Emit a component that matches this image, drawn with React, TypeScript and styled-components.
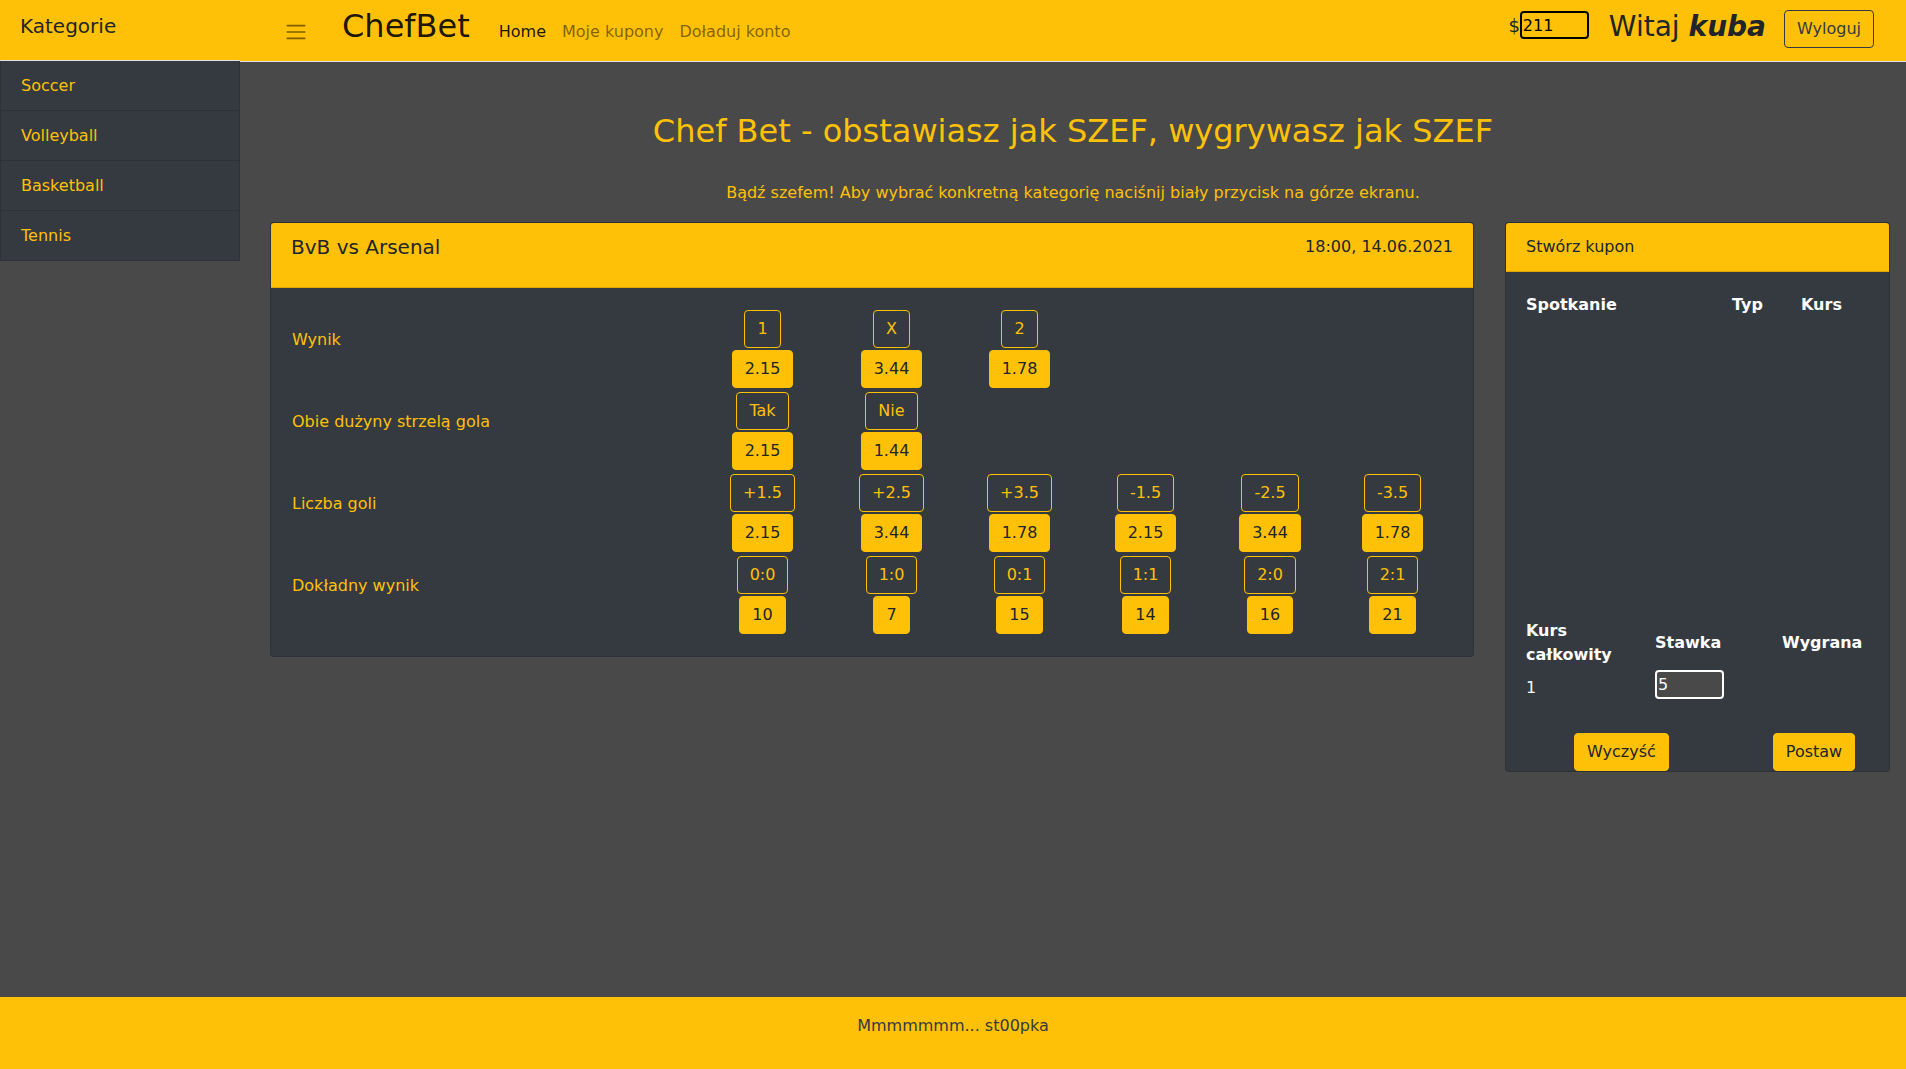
import React from "react";
import styled, { createGlobalStyle } from "styled-components";

const YELLOW = "#ffc107";
const DARK = "#343a40";
const BG = "#494949";
const TEXT = "#212529";

const GlobalStyle = createGlobalStyle`
  html, body { margin: 0; padding: 0; }
  body {
    background: ${BG};
    font-family: "DejaVu Sans", "Noto Sans", sans-serif;
    font-size: 16px;
    line-height: 1.5;
    color: ${TEXT};
  }
  *, *::before, *::after { box-sizing: border-box; }
  button, input { font-family: inherit; }
`;

const Page = styled.div`
  min-height: 100vh;
  display: flex;
  flex-direction: column;
`;

const Body = styled.div`
  flex: 1;
  display: flex;
  align-items: flex-start;
`;

const Sidebar = styled.aside`
  width: 240px;
  flex-shrink: 0;
`;

const SideHeader = styled.div`
  height: 61px;
  background: ${YELLOW};
  border-bottom: 1px solid #dee2e6;
  padding: 14px 0 0 20px;
  font-size: 20px;
  line-height: 1.2;
  color: ${TEXT};
`;

const SideList = styled.ul`
  list-style: none;
  margin: 0;
  padding: 0;
`;

const SideItem = styled.li`
  height: 50px;
  display: flex;
  align-items: center;
  padding: 1px 0 0 20px;
  background: ${DARK};
  color: ${YELLOW};
  border: 1px solid rgba(0, 0, 0, 0.125);
  border-top: 0;
`;

const MainCol = styled.div`
  flex: 1;
  display: flex;
  flex-direction: column;
`;

const Navbar = styled.nav`
  height: 62px;
  display: flex;
  align-items: flex-start;
  padding: 0 32px 0 44px;
  background: ${YELLOW};
  border-bottom: 1px solid #dee2e6;
`;

const Toggler = styled.svg`
  margin-top: 20px;
  width: 24px;
  height: 24px;
  flex-shrink: 0;
`;

const Brand = styled.a`
  margin: 7px 0 0 34px;
  font-size: 32px;
  line-height: 1.2;
  color: rgba(0, 0, 0, 0.9);
  text-decoration: none;
`;

const NavLinks = styled.div`
  display: flex;
  margin: 20px 0 0 21px;
`;

const NavLink = styled.a<{ $active?: boolean }>`
  padding: 0 8px;
  line-height: 24px;
  color: ${(p) => (p.$active ? "rgba(0,0,0,0.9)" : "rgba(0,0,0,0.5)")};
  text-decoration: none;
`;

const UserArea = styled.div`
  margin-left: auto;
  display: flex;
  align-items: flex-start;
`;

const Wallet = styled.div`
  display: flex;
  align-items: center;
  margin-top: 11px;
  height: 28px;
  font-size: 18px;
  color: ${TEXT};
`;

const WalletInput = styled.input`
  width: 69px;
  height: 28px;
  border: 2px solid #000;
  border-radius: 4px;
  background: transparent;
  font-size: 16px;
  color: #000;
  padding: 0 1px;
  outline: none;
`;

const Greeting = styled.div`
  margin: 10px 0 0 20px;
  font-size: 28px;
  line-height: 1.2;
  color: ${TEXT};
  b { font-weight: bold; font-style: italic; }
`;

const LogoutButton = styled.button`
  margin: 10px 0 0 18px;
  padding: 6px 12px;
  font-size: 16px;
  line-height: 24px;
  border: 1px solid ${DARK};
  border-radius: 4px;
  background: transparent;
  color: ${DARK};
`;

const Title = styled.h1`
  margin: 50px 0 0;
  text-align: center;
  font-size: 32px;
  line-height: 1.2;
  font-weight: normal;
  color: ${YELLOW};
`;

const Subtitle = styled.p`
  margin: 31px 0 0;
  text-align: center;
  line-height: 24px;
  color: ${YELLOW};
`;

const CardsRow = styled.div`
  display: grid;
  grid-template-columns: 1204px 385px;
  column-gap: 31px;
  align-items: start;
  margin-top: 17px;
  padding: 0 16px 0 30px;
`;

const Card = styled.section`
  background: ${DARK};
  border: 1px solid rgba(0, 0, 0, 0.125);
  border-radius: 4px;
  overflow: hidden;
`;

const MatchHeader = styled.header`
  display: flex;
  justify-content: space-between;
  align-items: flex-start;
  padding: 12px 20px 28px;
  background: ${YELLOW};
  border-bottom: 1px solid rgba(0, 0, 0, 0.125);
  line-height: 24px;
`;

const MatchTitle = styled.h5`
  margin: 0;
  font-size: 20px;
  line-height: 24px;
  font-weight: normal;
  color: ${TEXT};
`;

const MatchDate = styled.span`
  color: ${TEXT};
`;

const MatchBody = styled.div`
  display: flex;
  flex-direction: column;
  gap: 4px;
  padding: 22px 20px 22px 21px;
`;

const MarketRow = styled.div`
  display: grid;
  grid-template-columns: 406px 129px 129px 127px 125px 124px 121px;
`;

const MarketLabel = styled.div`
  padding-top: 18px;
  line-height: 24px;
  color: ${YELLOW};
`;

const OptionCell = styled.div`
  display: flex;
  flex-direction: column;
  align-items: center;
  gap: 2px;
`;

const BetButton = styled.button<{ $filled?: boolean }>`
  padding: 6px 12px;
  font-size: 16px;
  line-height: 24px;
  border-radius: 4px;
  border: 1px solid ${YELLOW};
  background: ${(p) => (p.$filled ? YELLOW : "transparent")};
  color: ${(p) => (p.$filled ? TEXT : YELLOW)};
`;

const CouponHeader = styled.header`
  padding: 12px 20px;
  line-height: 24px;
  background: ${YELLOW};
  border-bottom: 1px solid rgba(0, 0, 0, 0.125);
  color: ${TEXT};
`;

const CouponBody = styled.div`
  padding: 21px 20px 0;
`;

const BetsHead = styled.div`
  display: grid;
  grid-template-columns: 206px 69px 1fr;
  font-weight: bold;
  line-height: 24px;
  color: #fff;
`;

const BetsList = styled.div`
  height: 302px;
`;

const Summary = styled.div`
  display: grid;
  grid-template-columns: 129px 127px 1fr;
  row-gap: 3px;
  align-items: center;
  line-height: 24px;
  color: #fff;
`;

const SummaryLabel = styled.div`
  font-weight: bold;
`;

const SummaryValue = styled.div`
  align-self: start;
  padding-top: 6px;
  color: #f8f9fa;
`;

const StakeInput = styled.input`
  align-self: start;
  width: 69px;
  height: 29px;
  padding: 0 1px;
  border: 2px solid #fff;
  border-radius: 4px;
  background: ${BG};
  color: #f8f9fa;
  font-size: 16px;
  outline: none;
`;

const CouponActions = styled.div`
  display: flex;
  gap: 104px;
  margin-top: 33px;
  padding-left: 48px;
`;

const Footer = styled.footer`
  height: 72px;
  padding-top: 17px;
  background: ${YELLOW};
  text-align: center;
  line-height: 24px;
  color: ${DARK};
`;

const categories = ["Soccer", "Volleyball", "Basketball", "Tennis"];

const markets: { label: string; options: [string, string][] }[] = [
  { label: "Wynik", options: [["1", "2.15"], ["X", "3.44"], ["2", "1.78"]] },
  { label: "Obie dużyny strzelą gola", options: [["Tak", "2.15"], ["Nie", "1.44"]] },
  {
    label: "Liczba goli",
    options: [["+1.5", "2.15"], ["+2.5", "3.44"], ["+3.5", "1.78"], ["-1.5", "2.15"], ["-2.5", "3.44"], ["-3.5", "1.78"]],
  },
  {
    label: "Dokładny wynik",
    options: [["0:0", "10"], ["1:0", "7"], ["0:1", "15"], ["1:1", "14"], ["2:0", "16"], ["2:1", "21"]],
  },
];

export default function App() {
  return (
    <Page>
      <GlobalStyle />
      <Body>
        <Sidebar>
          <SideHeader>Kategorie</SideHeader>
          <SideList>
            {categories.map((c) => (
              <SideItem key={c}>{c}</SideItem>
            ))}
          </SideList>
        </Sidebar>
        <MainCol>
          <Navbar>
            <Toggler viewBox="0 0 30 30">
              <path
                d="M4 7h22M4 15h22M4 23h22"
                stroke="rgba(0,0,0,0.5)"
                strokeWidth="2"
                strokeLinecap="round"
                fill="none"
              />
            </Toggler>
            <Brand>ChefBet</Brand>
            <NavLinks>
              <NavLink $active>Home</NavLink>
              <NavLink>Moje kupony</NavLink>
              <NavLink>Doładuj konto</NavLink>
            </NavLinks>
            <UserArea>
              <Wallet>
                $<WalletInput defaultValue="211" />
              </Wallet>
              <Greeting>
                Witaj <b>kuba</b>
              </Greeting>
              <LogoutButton>Wyloguj</LogoutButton>
            </UserArea>
          </Navbar>
          <Title>Chef Bet - obstawiasz jak SZEF, wygrywasz jak SZEF</Title>
          <Subtitle>
            Bądź szefem! Aby wybrać konkretną kategorię naciśnij biały przycisk na górze ekranu.
          </Subtitle>
          <CardsRow>
            <Card>
              <MatchHeader>
                <MatchTitle>BvB vs Arsenal</MatchTitle>
                <MatchDate>18:00, 14.06.2021</MatchDate>
              </MatchHeader>
              <MatchBody>
                {markets.map((m) => (
                  <MarketRow key={m.label}>
                    <MarketLabel>{m.label}</MarketLabel>
                    {m.options.map(([name, odds]) => (
                      <OptionCell key={name}>
                        <BetButton>{name}</BetButton>
                        <BetButton $filled>{odds}</BetButton>
                      </OptionCell>
                    ))}
                  </MarketRow>
                ))}
              </MatchBody>
            </Card>
            <Card>
              <CouponHeader>Stwórz kupon</CouponHeader>
              <CouponBody>
                <BetsHead>
                  <span>Spotkanie</span>
                  <span>Typ</span>
                  <span>Kurs</span>
                </BetsHead>
                <BetsList />
                <Summary>
                  <SummaryLabel>Kurs całkowity</SummaryLabel>
                  <SummaryLabel>Stawka</SummaryLabel>
                  <SummaryLabel>Wygrana</SummaryLabel>
                  <SummaryValue>1</SummaryValue>
                  <StakeInput defaultValue="5" />
                  <SummaryValue />
                </Summary>
                <CouponActions>
                  <BetButton $filled>Wyczyść</BetButton>
                  <BetButton $filled>Postaw</BetButton>
                </CouponActions>
              </CouponBody>
            </Card>
          </CardsRow>
        </MainCol>
      </Body>
      <Footer>Mmmmmmm... st00pka</Footer>
    </Page>
  );
}
